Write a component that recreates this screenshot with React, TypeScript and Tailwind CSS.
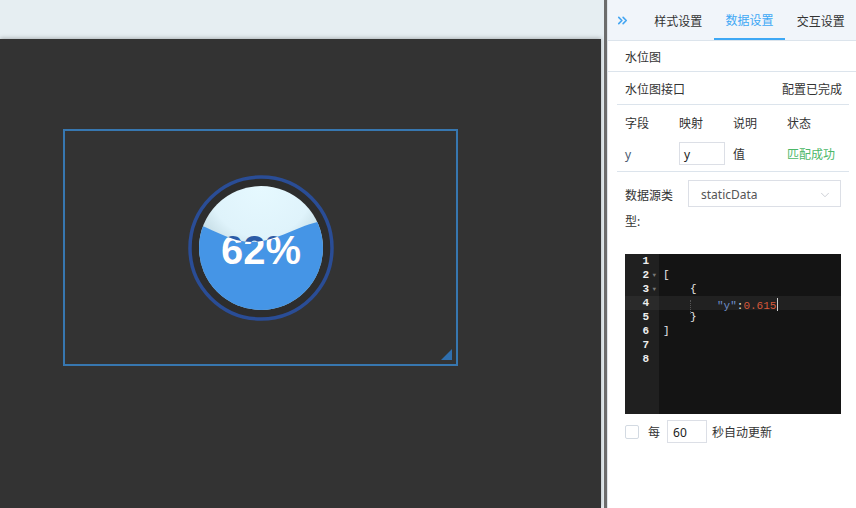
import { ChevronDown, ChevronsRight } from "lucide-react";

const cn = '"Noto Sans", "Noto Sans CJK SC", sans-serif';
const mono = '"Liberation Mono", "DejaVu Sans Mono", monospace';

const tabs = ["样式设置", "数据设置", "交互设置"];

const codeLines: { n: number; fold?: boolean; active?: boolean; content: React.ReactNode }[] = [
  { n: 1, content: null },
  { n: 2, fold: true, content: <span className="text-[#e8e8e8]">[</span> },
  { n: 3, fold: true, content: <span className="pl-[27px] text-[#e8e8e8]">{"{"}</span> },
  {
    n: 4,
    active: true,
    content: (
      <span className="relative pl-[54px]">
        <span className="absolute left-[27px] top-0 h-[14px] border-l border-dotted border-[#555]" />
        <span className="text-[#6f8fc9]">"y"</span>
        <span className="text-[#e8e8e8]">:</span>
        <span className="text-[#d8583a]">0.615</span>
        <span className="ml-px inline-block h-[13px] w-px translate-y-[2px] bg-[#d0d0d0]" />
      </span>
    ),
  },
  { n: 5, content: <span className="pl-[27px] text-[#e8e8e8]">{"}"}</span> },
  { n: 6, content: <span className="text-[#e8e8e8]">]</span> },
  { n: 7, content: null },
  { n: 8, content: null },
];

export default function App() {
  return (
    <div className="flex h-[508px] w-[856px] overflow-hidden bg-[#e6eef2]" style={{ fontFamily: cn }}>
      {/* canvas area */}
      <div className="flex w-[604px] shrink-0 flex-col pt-[39px]">
        <div className="flex-1 w-[601px] bg-[#333333] shadow-[0_-1px_4px_rgba(0,0,0,0.25)]">
          <div className="relative ml-[63px] mt-[90px] flex h-[237px] w-[395px] items-center justify-center border-2 border-[#3777b0]">
            <Gauge />
            <div className="absolute bottom-[4px] right-[4px] h-0 w-0 border-b-[11px] border-l-[11px] border-b-[#2f6fae] border-l-transparent" />
          </div>
        </div>
      </div>

      {/* splitter */}
      <div className="w-[3px] shrink-0 bg-[#6c6c6c]" />
      <div className="w-px shrink-0 bg-[#dfe5ea]" />

      {/* right panel */}
      <div className="flex w-[248px] shrink-0 flex-col bg-white text-[12px] text-[#333]">
        <div className="flex h-[41px] items-stretch border-b border-[#dce4ec] bg-[#f1f5fa]">
          <div className="flex w-[35px] items-center pl-[7px] text-[#45a6f2]">
            <ChevronsRight size={15} strokeWidth={2.6} />
          </div>
          {tabs.map((t, i) => (
            <div
              key={t}
              className={
                i === 1
                  ? "flex w-[72px] items-center justify-center border-b-2 border-[#3ea8f5] pt-[3px] text-[#3ea8f5]"
                  : "flex w-[71px] items-center justify-center pt-[3px] text-[#333]"
              }
            >
              {t}
            </div>
          ))}
        </div>

        <div className="flex h-[31px] items-center border-b border-[#dce4ec] pl-[17px] pt-[3px]">水位图</div>

        <div className="mx-[9px] mr-[7px]">
          <div className="flex h-[33px] items-center justify-between border-b border-[#dce4ec] pl-[8px] pr-[7px] pt-[3px]">
            <span>水位图接口</span>
            <span>配置已完成</span>
          </div>

          <div className="border-b border-[#dce4ec] pl-[8px]">
            <div className="grid h-[34px] grid-cols-[54px_54px_54px_1fr] items-center pt-[3px]">
              <span>字段</span>
              <span>映射</span>
              <span>说明</span>
              <span>状态</span>
            </div>
            <div className="grid h-[32px] grid-cols-[54px_54px_54px_1fr] items-center pb-[4px]">
              <span className="pt-[3px] text-[#4a5a72]">y</span>
              <div className="flex h-[23px] w-[46px] items-center border border-[#dcdfe6] pl-[4px] pt-[4px] text-[#222]">y</div>
              <span className="pt-[3px]">值</span>
              <span className="pt-[3px] text-[#4cb868]">匹配成功</span>
            </div>
          </div>

          <div className="flex pl-[8px] pt-[8px]">
            <div className="w-[52px] pt-[3px] leading-[26px]">数据源类型:</div>
            <div className="ml-[11px] flex h-[27px] w-[153px] items-center justify-between border border-[#dcdfe6] pl-[12px] pr-[8px] pt-[2px] text-[#555]">
              <span>staticData</span>
              <ChevronDown size={14} strokeWidth={1.2} className="text-[#b8bcc4]" />
            </div>
          </div>
        </div>

        {/* code editor */}
        <div className="ml-[17px] mt-[19px] flex h-[160px] w-[216px] bg-[#141414]" style={{ fontFamily: mono }}>
          <div className="w-[34px] shrink-0 bg-[#202020]">
            {codeLines.map((l) => (
              <div
                key={l.n}
                className={
                  l.active
                    ? "relative flex h-[14px] items-center justify-end bg-[#2a2a2a] pr-[10px] text-[11px] font-bold leading-[14px] text-[#eee]"
                    : "relative flex h-[14px] items-center justify-end pr-[10px] text-[11px] font-bold leading-[14px] text-[#eee]"
                }
              >
                {l.n}
                {l.fold && <span className="absolute right-[3px] top-[1px] text-[6px] text-[#777]">▼</span>}
              </div>
            ))}
          </div>
          <div className="flex-1 pl-[4px]">
            {codeLines.map((l) => (
              <div
                key={l.n}
                className={
                  l.active
                    ? "-ml-[4px] h-[14px] whitespace-pre bg-[#212121] pl-[4px] text-[11px] leading-[14px]"
                    : "h-[14px] whitespace-pre text-[11px] leading-[14px]"
                }
              >
                {l.content}
              </div>
            ))}
          </div>
        </div>

        <div className="mt-[6px] flex items-center pl-[17px]">
          <div className="h-[14px] w-[14px] rounded-[2px] border border-[#d3dae2]" />
          <span className="ml-[9px] pt-[3px]">每</span>
          <div className="ml-[7px] flex h-[23px] w-[40px] items-center border border-[#dcdfe6] pl-[5px] pt-[3px] text-[#222]">60</div>
          <span className="ml-[5px] pt-[3px]">秒自动更新</span>
        </div>
      </div>
    </div>
  );
}

function Gauge() {
  const wave = "M8,50 C28,56 44,69 66,69 C92,69 114,50 142,47 L142,142 L8,142 Z";
  return (
    <svg width="150" height="150" viewBox="0 0 150 150" aria-hidden="true">
      <defs>
        <radialGradient id="sky" cx="50%" cy="0%" r="75%">
          <stop offset="0%" stopColor="#e6f9ff" />
          <stop offset="55%" stopColor="#dff3fb" />
          <stop offset="100%" stopColor="#a9c3cb" />
        </radialGradient>
        <clipPath id="inner">
          <circle cx="75" cy="75" r="62" />
        </clipPath>
        <clipPath id="water">
          <path d={wave} />
        </clipPath>
      </defs>
      <circle cx="75" cy="75" r="71" fill="#2d2d2d" stroke="#2a4d96" strokeWidth="3.5" />
      <circle cx="75" cy="75" r="62" fill="url(#sky)" />
      <g clipPath="url(#inner)">
        <path d={wave} fill="#4595e6" />
      </g>
      <text
        x="75"
        y="91"
        textAnchor="middle"
        fontFamily='"Liberation Sans", Arial, sans-serif'
        fontWeight="700"
        fontSize="40"
        fill="#2c5ba6"
      >
        62%
      </text>
      <g clipPath="url(#water)">
        <text
          x="75"
          y="91"
          textAnchor="middle"
          fontFamily='"Liberation Sans", Arial, sans-serif'
          fontWeight="700"
          fontSize="40"
          fill="#ffffff"
        >
          62%
        </text>
      </g>
    </svg>
  );
}
